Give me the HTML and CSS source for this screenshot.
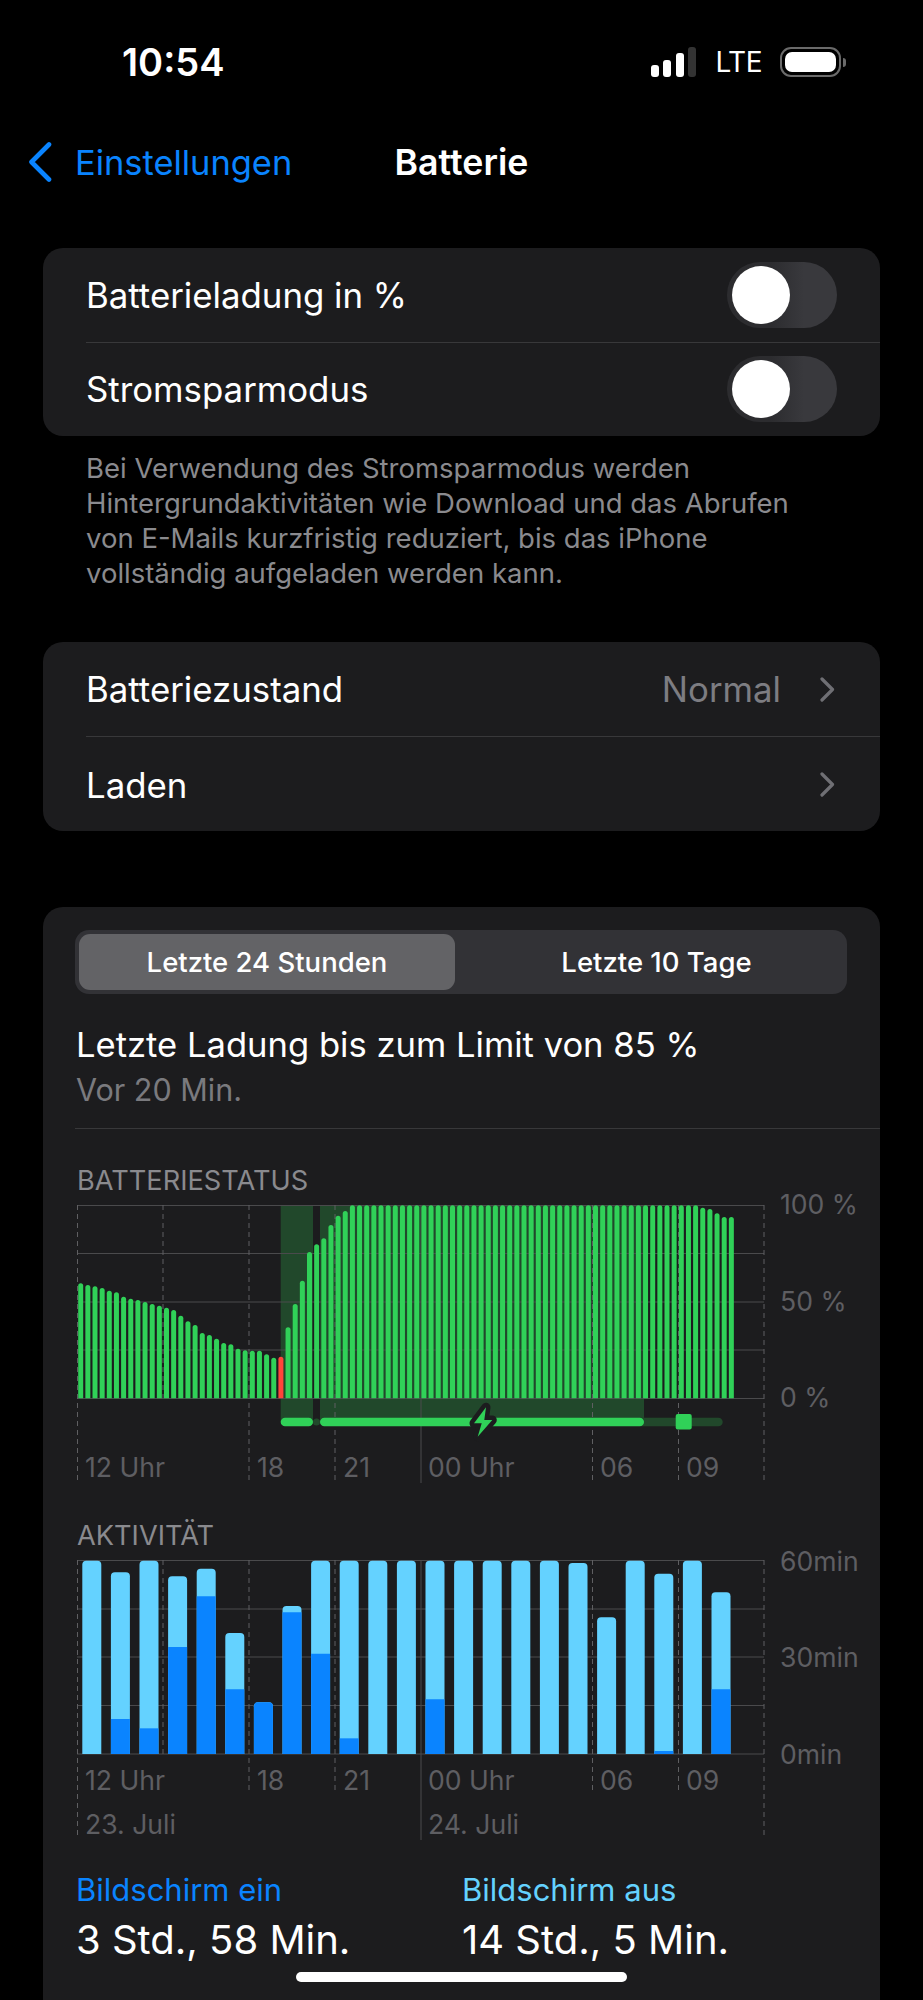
FILE: index.html
```html
<!DOCTYPE html>
<html lang="de">
<head>
    <meta charset="UTF-8">
    <meta name="viewport" content="width=device-width, initial-scale=1.0">
    <title>Batterie</title>
    <link rel="stylesheet" href="styles.css">
</head>
<body>
    <div class="screen">
        <div class="status-bar">
            <span class="time">10:54</span>
            <div class="status-icons">
                <div class="signal">
                    <i class="s1"></i><i class="s2"></i><i class="s3"></i><i class="s4"></i>
                </div>
                <span class="network">LTE</span>
                <div class="battery"><div class="battery-fill"></div></div>
                <div class="battery-nub"></div>
            </div>
        </div>

        <div class="nav-bar">
            <div class="nav-back">
                <svg class="nav-chevron" width="24" height="40" viewBox="0 0 24 40">
                    <path d="M21 2.5 L3.5 20 L21 37.5" fill="none" stroke="#0a84ff" stroke-width="4.6" stroke-linecap="round" stroke-linejoin="round"/>
                </svg>
                <span>Einstellungen</span>
            </div>
            <div class="nav-title">Batterie</div>
        </div>

        <div class="card first-card">
            <div class="row">
                <span>Batterieladung in %</span>
                <div class="toggle"><div class="knob"></div></div>
            </div>
            <div class="row">
                <span>Stromsparmodus</span>
                <div class="toggle"><div class="knob"></div></div>
            </div>
        </div>
        <p class="footnote">Bei Verwendung des Stromsparmodus werden<br>Hintergrundaktivitäten wie Download und das Abrufen<br>von E-Mails kurzfristig reduziert, bis das iPhone<br>vollständig aufgeladen werden kann.</p>

        <div class="card link-card">
            <div class="row">
                <span>Batteriezustand</span>
                <div class="row-right">
                    <span class="row-value">Normal</span>
                    <svg class="row-chevron" width="15" height="25" viewBox="0 0 15 25"><path d="M2 2 L12.5 12.5 L2 23" fill="none" stroke="#6f6f74" stroke-width="3.2" stroke-linecap="round" stroke-linejoin="round"/></svg>
                </div>
            </div>
            <div class="row">
                <span>Laden</span>
                <div class="row-right">
                    <svg class="row-chevron" width="15" height="25" viewBox="0 0 15 25"><path d="M2 2 L12.5 12.5 L2 23" fill="none" stroke="#6f6f74" stroke-width="3.2" stroke-linecap="round" stroke-linejoin="round"/></svg>
                </div>
            </div>
        </div>

        <div class="card usage-card">
            <div class="segments">
                <div class="segment active">Letzte 24 Stunden</div>
                <div class="segment">Letzte 10 Tage</div>
            </div>

            <div class="last-charge">Letzte Ladung bis zum Limit von 85 %</div>
            <div class="last-charge-time">Vor 20 Min.</div>
            <div class="usage-divider"></div>

            <div class="chart-title">BATTERIESTATUS</div>
            <svg class="chart" width="800" height="290" viewBox="0 0 800 290">
                <!-- Ladezeitraum -->
                <rect x="203.7" y="5" width="32.3" height="217" fill="#21482b"/>
                <rect x="243" y="5" width="324" height="217" fill="#21482b"/>

                <g class="grid">
                    <line x1="0" x2="687" y1="5.5" y2="5.5"/>
                    <line x1="0" x2="687" y1="53.5" y2="53.5"/>
                    <line x1="0" x2="687" y1="102" y2="102"/>
                    <line x1="0" x2="687" y1="150" y2="150"/>
                    <line x1="0" x2="687" y1="198.5" y2="198.5"/>
                    <line x1="344" x2="344" y1="5" y2="283"/>
                </g>
                <g class="grid dashed">
                    <line x1="0.5" x2="0.5" y1="5" y2="280"/>
                    <line x1="86" x2="86" y1="5" y2="198"/>
                    <line x1="172" x2="172" y1="5" y2="280"/>
                    <line x1="258" x2="258" y1="5" y2="280"/>
                    <line x1="515.5" x2="515.5" y1="5" y2="280"/>
                    <line x1="601.5" x2="601.5" y1="5" y2="280"/>
                    <line x1="687" x2="687" y1="5" y2="280"/>
                </g>

                <g id="batteryBars"></g>

                <!-- Ladeleiste -->
                <rect x="203.7" y="217.7" width="32.3" height="8.6" rx="4.3" fill="#30d158"/>
                <circle cx="239.5" cy="222" r="3.5" fill="#21482b"/>
                <rect x="560" y="217.7" width="85.7" height="8.6" rx="4.3" fill="#21482b"/>
                <rect x="243" y="217.7" width="324" height="8.6" rx="4.3" fill="#30d158"/>
                <rect x="598.7" y="214" width="16" height="15.5" rx="2" fill="#30d158"/>
                <polygon class="bolt" points="409,207.3 397,223.3 404.7,223.3 400.7,236.7 415.3,220 407.3,220"/>

                <g class="axis">
                    <text x="8" y="277">12 Uhr</text>
                    <text x="180" y="277">18</text>
                    <text x="266" y="277">21</text>
                    <text x="351" y="277">00 Uhr</text>
                    <text x="523" y="277">06</text>
                    <text x="609" y="277">09</text>
                    <text x="703" y="14">100 %</text>
                    <text x="703" y="111">50 %</text>
                    <text x="703" y="207">0 %</text>
                </g>
            </svg>

            <div class="chart-title activity-title">AKTIVITÄT</div>
            <svg class="chart" width="800" height="295" viewBox="0 0 800 295">
                <g class="grid">
                    <line x1="0" x2="687" y1="5.5" y2="5.5"/>
                    <line x1="0" x2="687" y1="54" y2="54"/>
                    <line x1="0" x2="687" y1="102" y2="102"/>
                    <line x1="0" x2="687" y1="150.5" y2="150.5"/>
                    <line x1="0" x2="687" y1="199" y2="199"/>
                    <line x1="344" x2="344" y1="5" y2="285"/>
                </g>
                <g class="grid dashed">
                    <line x1="0.5" x2="0.5" y1="5" y2="280"/>
                    <line x1="86" x2="86" y1="5" y2="199"/>
                    <line x1="172" x2="172" y1="5" y2="238"/>
                    <line x1="258" x2="258" y1="5" y2="238"/>
                    <line x1="515.5" x2="515.5" y1="5" y2="238"/>
                    <line x1="601.5" x2="601.5" y1="5" y2="238"/>
                    <line x1="687" x2="687" y1="5" y2="280"/>
                </g>

                <g id="activityBars"></g>

                <g class="axis">
                    <text x="8" y="235">12 Uhr</text>
                    <text x="180" y="235">18</text>
                    <text x="266" y="235">21</text>
                    <text x="351" y="235">00 Uhr</text>
                    <text x="523" y="235">06</text>
                    <text x="609" y="235">09</text>
                    <text x="8" y="279">23. Juli</text>
                    <text x="351" y="279">24. Juli</text>
                    <text x="703" y="16">60min</text>
                    <text x="703" y="112">30min</text>
                    <text x="703" y="209">0min</text>
                </g>
            </svg>

            <div class="legend">
                <div>
                    <div class="legend-label on">Bildschirm ein</div>
                    <div class="legend-value">3 Std., 58 Min.</div>
                </div>
                <div>
                    <div class="legend-label off">Bildschirm aus</div>
                    <div class="legend-value">14 Std., 5 Min.</div>
                </div>
            </div>
        </div>

        <div class="home-indicator"></div>
    </div>

    <script src="script.js"></script>
</body>
</html>
```

FILE: styles.css
```css
* {
    box-sizing: border-box;
}
body {
    margin: 0;
    background: #000;
    color: #fff;
    font-family: Inter, "Noto Sans", sans-serif;
}
.screen {
    position: relative;
    width: 923px;
    height: 2000px;
    overflow: hidden;
}

/* status bar */
.status-bar {
    height: 124px;
    padding: 0 77px 0 122px;
    display: flex;
    align-items: center;
    justify-content: space-between;
}
.time {
    font-size: 38px;
    font-weight: 600;
}
.status-icons {
    display: flex;
    align-items: center;
}
.signal {
    display: flex;
    align-items: flex-end;
    gap: 4.5px;
    height: 30px;
    margin-right: 19px;
}
.signal i {
    display: block;
    width: 8px;
    background: #fff;
    border-radius: 3px;
}
.s1 { height: 12px; }
.s2 { height: 17px; }
.s3 { height: 24px; }
.signal .s4 { height: 30px; background: #333; }
.network {
    font-size: 28px;
    font-weight: 400;
    letter-spacing: -0.5px;
    margin-right: 18px;
}
.battery {
    width: 61px;
    height: 30px;
    padding: 3px;
    border: 2.5px solid #6a6a6a;
    border-radius: 11px;
}
.battery-fill {
    width: 100%;
    height: 100%;
    background: #fff;
    border-radius: 7px;
}
.battery-nub {
    width: 3px;
    height: 9px;
    margin-left: 2px;
    background: #6a6a6a;
    border-radius: 0 3px 3px 0;
}

/* nav */
.nav-bar {
    height: 76px;
    display: grid;
    grid-template-columns: 1fr auto 1fr;
    align-items: center;
}
.nav-back {
    display: flex;
    align-items: center;
    padding-left: 28px;
    color: #0a84ff;
    font-size: 34.4px;
}
.nav-chevron {
    margin-right: 23px;
}
.nav-title {
    font-size: 35.7px;
    font-weight: 600;
}

/* cards */
.card {
    margin: 0 43px;
    background: #1c1c1e;
    border-radius: 20px;
}
.first-card {
    margin-top: 48px;
}
.link-card {
    padding-bottom: 1px;
}
.link-card .row + .row {
    padding-top: 3px;
}
.row {
    position: relative;
    height: 94px;
    padding: 0 43px 0 43px;
    display: flex;
    align-items: center;
    justify-content: space-between;
    font-size: 34.8px;
}
.row + .row::before {
    content: "";
    position: absolute;
    left: 43px;
    right: 0;
    top: 0;
    height: 1px;
    background: #38383a;
}
.toggle {
    width: 110px;
    height: 66px;
    padding: 4px 5px;
    background: linear-gradient(to right, #2c2c2f 0, #2c2c2f 40%, #39393d 70%);
    border-radius: 33px;
}
.knob {
    width: 58px;
    height: 58px;
    background: #fff;
    border-radius: 50%;
}
.row-right {
    display: flex;
    align-items: center;
}
.row-value {
    color: #7d7d82;
    margin-right: 39px;
}
.row-chevron {
    display: block;
    margin-right: 2px;
}
.footnote {
    margin: 15px 40px 51px 86px;
    color: #8a8a8e;
    font-size: 27.5px;
    line-height: 35px;
    white-space: nowrap;
}

/* usage card */
.usage-card {
    margin-top: 76px;
    height: 1200px;
    padding-top: 23px;
    border-bottom-left-radius: 0;
    border-bottom-right-radius: 0;
}
.segments {
    display: flex;
    width: 772px;
    height: 64px;
    margin-left: 32px;
    padding: 4px;
    background: #323236;
    border-radius: 14px;
    font-size: 27.5px;
    font-weight: 500;
}
.segment {
    flex: 1;
    display: flex;
    align-items: center;
    justify-content: center;
    padding-left: 15px;
}
.segment.active {
    flex: none;
    width: 376px;
    padding-left: 0;
    background: #636366;
    border-radius: 11px;
}
.last-charge {
    margin: 28px 0 0 33px;
    font-size: 34.6px;
    line-height: 44px;
}
.last-charge-time {
    margin: 4px 0 0 33px;
    color: #7a7a7e;
    font-size: 30.5px;
    line-height: 40px;
}
.usage-divider {
    height: 1px;
    margin: 18px 0 0 32px;
    background: #38383a;
}
.chart-title {
    margin: 36px 0 3px 34px;
    color: #8a8a8e;
    font-size: 27.2px;
    line-height: 32px;
}
.activity-title {
    margin-top: 30px;
}
.chart {
    display: block;
    margin-left: 34px;
    overflow: visible;
}
.grid line {
    stroke: #4a4a4c;
    stroke-width: 1;
}
.grid.dashed line {
    stroke: #5f5f62;
    stroke-dasharray: 5 4;
}
.axis text {
    fill: #5e5e62;
    font-size: 26.6px;
}
.bolt {
    fill: #30d158;
    stroke: #1c1c1e;
    stroke-width: 9;
    stroke-linejoin: round;
    paint-order: stroke;
}
.legend {
    display: grid;
    grid-template-columns: 386px 1fr;
    margin: 20px 0 0 33px;
}
.legend-label {
    font-size: 31px;
    line-height: 40px;
}
.legend-label.on {
    color: #0a84ff;
}
.legend-label.off {
    color: #64d2ff;
}
.legend-value {
    margin-top: 6px;
    font-size: 40px;
    line-height: 48px;
}
.home-indicator {
    position: absolute;
    left: 296px;
    top: 1972px;
    width: 331px;
    height: 10px;
    background: #fff;
    border-radius: 5px;
}
```

FILE: script.js
```js
const NS = 'http://www.w3.org/2000/svg';

// top of each bar in the 3x crop units, baseline 745
const batteryTops = [400, 405, 409, 414, 422, 427, 440, 446, 450, 456, 462, 467, 473, 480, 497, 514, 525, 549, 555, 566, 579, 583, 596, 601, 602, 602, 613, 623, 620,
    532, 462, 392, 306, 283, 265, 225, 197, 183];
while (batteryTops.length < 87) batteryTops.push(166);
batteryTops.push(173, 177, 190, 201, 201);

// [top, start of dark part], baseline 762
const activity = [
    [182, 762], [217, 657], [182, 685], [229, 441], [206, 289], [399, 568], [607, 607], [318, 337],
    [182, 461], [182, 715], [182, 762], [182, 762], [182, 598], [182, 762], [182, 762], [182, 762],
    [182, 762], [189, 762], [352, 762], [182, 762], [221, 753], [182, 762], [277, 568]
];

function topRounded(x, top, w, base, r) {
    return `M${x} ${base}V${top + r}Q${x} ${top} ${x + r} ${top}H${x + w - r}Q${x + w} ${top} ${x + w} ${top + r}V${base}Z`;
}

function addPath(parent, d, color) {
    const p = document.createElementNS(NS, 'path');
    p.setAttribute('d', d);
    p.setAttribute('fill', color);
    parent.appendChild(p);
}

const batteryBars = document.getElementById('batteryBars');
batteryTops.forEach((t, i) => {
    const top = 198.3 - (745 - t) / 3;
    addPath(batteryBars, topRounded(1.2 + i * 7.15, top, 5, 198.3, 2.5), i === 28 ? '#ff453a' : '#30d158');
});

const activityBars = document.getElementById('activityBars');
activity.forEach(([t, d], i) => {
    const x = 5.3 + i * 28.6;
    const top = 199 - (762 - t) / 3;
    const darkTop = 199 - (762 - d) / 3;
    addPath(activityBars, topRounded(x, top, 19, 199, 4), '#64d2ff');
    if (d === t) {
        addPath(activityBars, topRounded(x, top, 19, 199, 4), '#0a84ff');
    } else if (d < 762) {
        addPath(activityBars, `M${x} 199V${darkTop}H${x + 19}V199Z`, '#0a84ff');
    }
});
```
